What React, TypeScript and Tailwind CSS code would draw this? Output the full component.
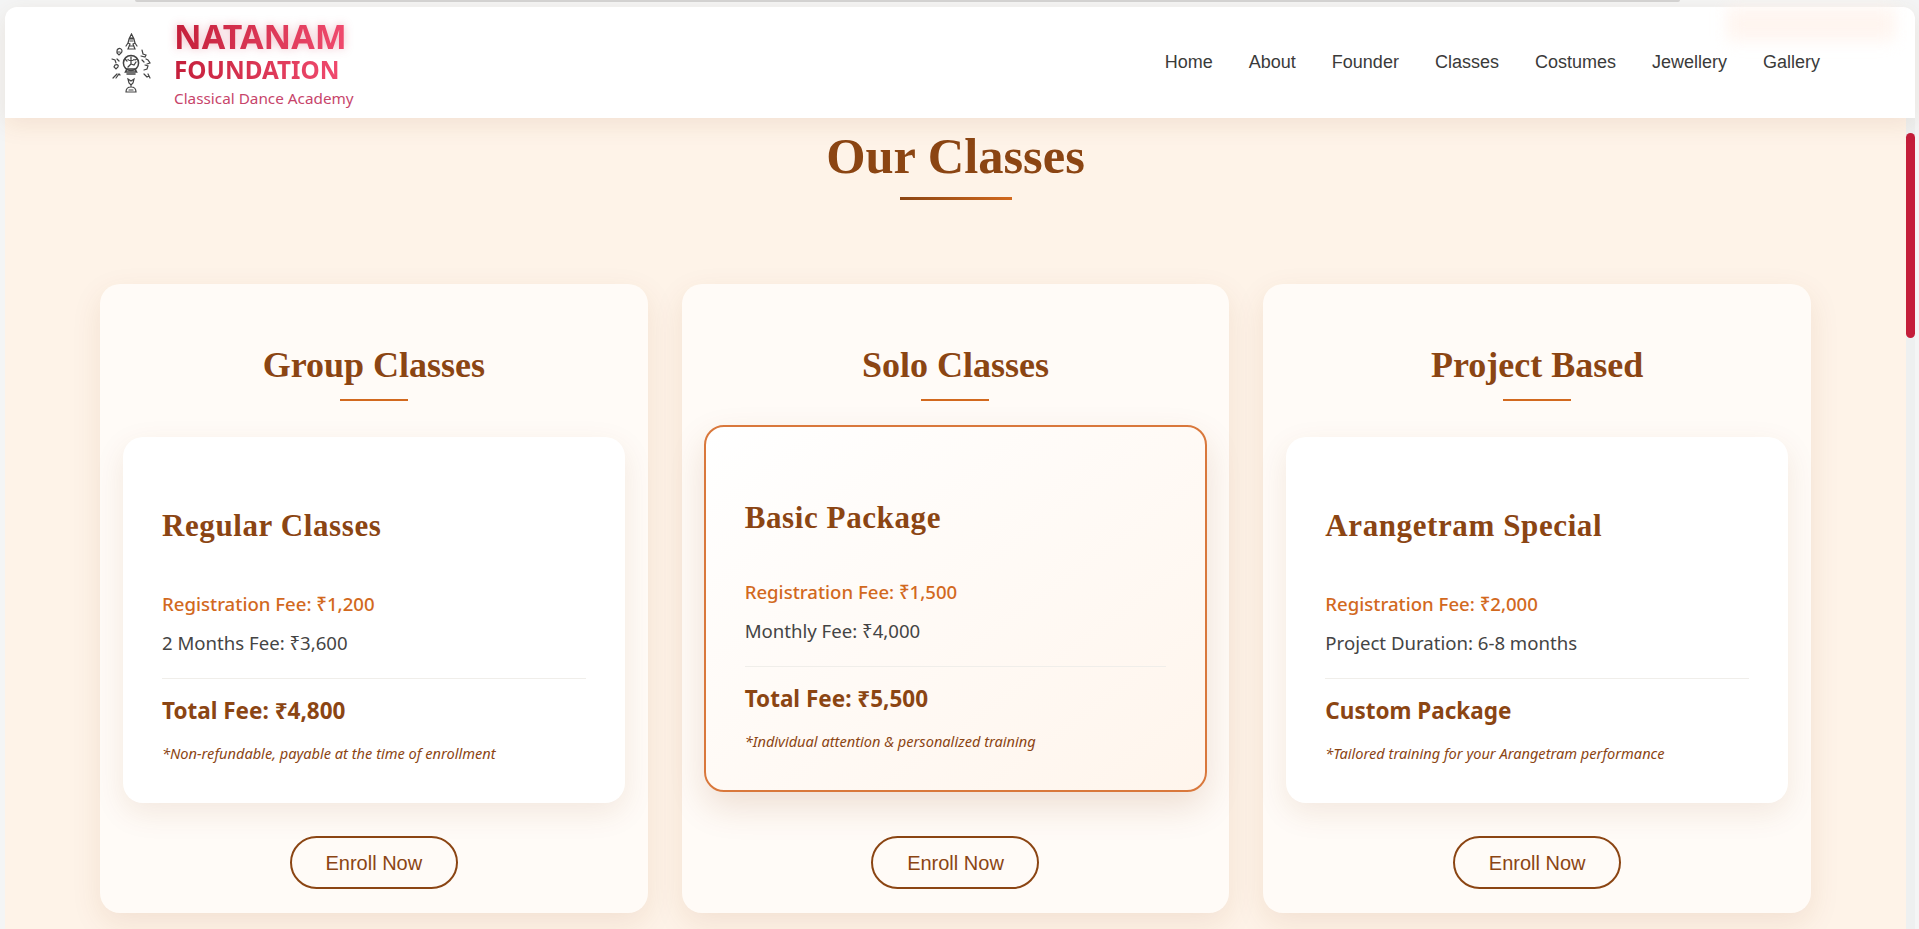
const navLinks = ["Home", "About", "Founder", "Classes", "Costumes", "Jewellery", "Gallery"];

type Plan = {
  heading: string;
  name: string;
  registration: string;
  fee: string;
  total: string;
  note: string;
  popular?: boolean;
};

const plans: Plan[] = [
  {
    heading: "Group Classes",
    name: "Regular Classes",
    registration: "Registration Fee: ₹1,200",
    fee: "2 Months Fee: ₹3,600",
    total: "Total Fee: ₹4,800",
    note: "*Non-refundable, payable at the time of enrollment",
  },
  {
    heading: "Solo Classes",
    name: "Basic Package",
    registration: "Registration Fee: ₹1,500",
    fee: "Monthly Fee: ₹4,000",
    total: "Total Fee: ₹5,500",
    note: "*Individual attention & personalized training",
    popular: true,
  },
  {
    heading: "Project Based",
    name: "Arangetram Special",
    registration: "Registration Fee: ₹2,000",
    fee: "Project Duration: 6-8 months",
    total: "Custom Package",
    note: "*Tailored training for your Arangetram performance",
  },
];

function Logo() {
  return (
    <svg viewBox="0 0 43 60" className="h-[60px] w-[43px] shrink-0" fill="none" stroke="#444444" strokeLinecap="round" strokeWidth="1.2">
      {/* top deity */}
      <path d="M21.5 1l2 4h-4zM19 6h5l1 4-2 1 2 5h-7l2-5-2-1zM18 10l-2 3M25 10l2 3M20 8h3M20 13h3" />
      {/* ring + dancer */}
      <circle cx="21" cy="30" r="7.6" strokeWidth="1.500" />
      <path d="M21 24v2M18 26.500c1 1.500 5 1.500 6 0M21 27v4l-3 3M21 31l3 1 2-3M17 28l-2-2M25 27l2-1" strokeWidth="1.300" />
      <path d="M15.500 39h11l-1.500-3h-8zM17 41h8" strokeWidth="1.600" />
      {/* left mudras */}
      <path d="M7 18a2.500 2.500 0 1 1 4 2l-2 2-2-2zM8 19h2M2 26l3 1 1 3M7 26l2 2M5 32c2-1 4 0 3 2l-2 2-2-2zM3 45l4-4M6 45l3-4 1 1" />
      {/* right mudras */}
      <path d="M32 17l1 4 3 1-1 2-4-1M36 26l2 1 2 3-3 1M32 27l2 2M35 32l3 1-1 3-3 1M34 41l3 3 2-1M38 41l2 4" />
      {/* bottom figure */}
      <path d="M18 46l3 2 3-2-1 4-2 2-2-2zM21 52v2M16 59c0-3 2-5 5-5s5 2 5 5zM19 57h4" />
    </svg>
  );
}

function PlanCard({ plan }: { plan: Plan }) {
  return (
    <section className="flex flex-col items-center rounded-[20px] bg-[#fffbf7] px-[23px] pt-[61px] pb-[24px] shadow-[0_10px_30px_rgba(139,69,19,0.1)]">
      <h2 className="font-['Liberation_Serif',serif] text-[36px] leading-[40px] font-bold text-[#8b4513]">{plan.heading}</h2>
      <div className="mt-[14px] h-[2px] w-[68px] bg-[#d2691e]" />
      <div
        className={
          plan.popular
            ? "mt-[36px] -mb-px h-[367px] w-[calc(100%+2px)] -translate-y-3 rounded-[20px] border-2 border-[#d9783c] bg-gradient-to-br from-white to-[#fff5ec] px-[39px] pt-[70px] shadow-[0_15px_35px_rgba(139,69,19,0.15)]"
            : "mt-[36px] h-[366px] w-full rounded-[20px] bg-white px-[39px] pt-[68px] shadow-[0_10px_30px_rgba(139,69,19,0.1)]"
        }
      >
        <h3 className="font-['Liberation_Serif',serif] text-[31px] leading-[42px] font-bold tracking-[0.6px] text-[#8b4513]">{plan.name}</h3>
        <p className={`text-[18.600px] leading-[26px] font-medium text-[#d2691e] ${plan.popular ? "mt-[40px]" : "mt-[44px]"}`}>{plan.registration}</p>
        <p className="mt-[13px] text-[18.600px] leading-[26px] text-[#444444]">{plan.fee}</p>
        <div className="mt-[22px] h-px w-full bg-[#f0eeea]" />
        <p className="mt-[16px] text-[22.500px] leading-[32px] font-bold text-[#8b4513]">{plan.total}</p>
        <p className="mt-[16px] text-[14.600px] leading-[20px] text-[#8b4513] italic">{plan.note}</p>
      </div>
      <button className="mt-[33px] h-[53px] w-[168px] rounded-[27px] border-2 border-[#8b4513] font-['Liberation_Sans',sans-serif] text-[20px] text-[#8b4513]">
        Enroll Now
      </button>
    </section>
  );
}

export default function App() {
  return (
    <div className="flex h-screen flex-col overflow-hidden bg-[#f4f5f5] pr-[4px] pl-[5px] font-['Noto_Sans',sans-serif]">
      <div className="h-[7px] shrink-0 pr-[235px] pl-[130px]">
        <div className="h-[2px] rounded-b-md bg-[#d4d4d4]" />
      </div>

      <header className="relative z-10 flex h-[111px] shrink-0 items-center justify-between rounded-t-xl bg-white pr-[95px] pl-[105px] shadow-[0_6px_24px_rgba(139,69,19,0.1)]">
        <div className="pointer-events-none absolute top-0 left-[1722px] h-[34px] w-[168px] bg-[#fff3ec] opacity-80 blur-[8px]" />
        <div className="flex items-center gap-[21px]">
          <Logo />
          <div className="flex flex-col">
            <span className="w-fit bg-gradient-to-r from-[#c41e3a] to-[#f04a6e] bg-clip-text text-[34px] leading-[38px] font-bold text-transparent drop-shadow-[0_0_5px_rgba(196,30,58,0.3)]">NATANAM</span>
            <span className="w-fit bg-gradient-to-r from-[#c41e3a] to-[#f04a6e] bg-clip-text text-[24.300px] leading-[30px] font-bold text-transparent">FOUNDATION</span>
            <span className="mt-[3px] text-[15.300px] leading-[20px] text-[#c7446a]">Classical Dance Academy</span>
          </div>
        </div>
        <nav className="flex gap-[36px] font-['Liberation_Sans',sans-serif] text-[18px] text-[#3a3a3a]">
          {navLinks.map((link) => (
            <a key={link} href="#">
              {link}
            </a>
          ))}
        </nav>
      </header>

      <div className="flex min-h-0 flex-1">
        <main className="min-w-0 flex-1 bg-[#fef3e8] px-[95px]">
          <h1 className="mt-[6px] text-center font-['Liberation_Serif',serif] text-[50.500px] leading-[64px] font-bold text-[#8b4513]">Our Classes</h1>
          <div className="mx-auto mt-[9px] h-[3px] w-[112px] bg-gradient-to-r from-[#8b4513] to-[#d2691e]" />
          <div className="mt-[84px] grid grid-cols-3 gap-[34px]">
            {plans.map((plan) => (
              <PlanCard key={plan.heading} plan={plan} />
            ))}
          </div>
        </main>
        <div className="w-[9px] shrink-0 bg-[#eef0f0] pt-[15px]">
          <div className="h-[205px] rounded-full bg-[#c41e3a]" />
        </div>
      </div>
    </div>
  );
}
